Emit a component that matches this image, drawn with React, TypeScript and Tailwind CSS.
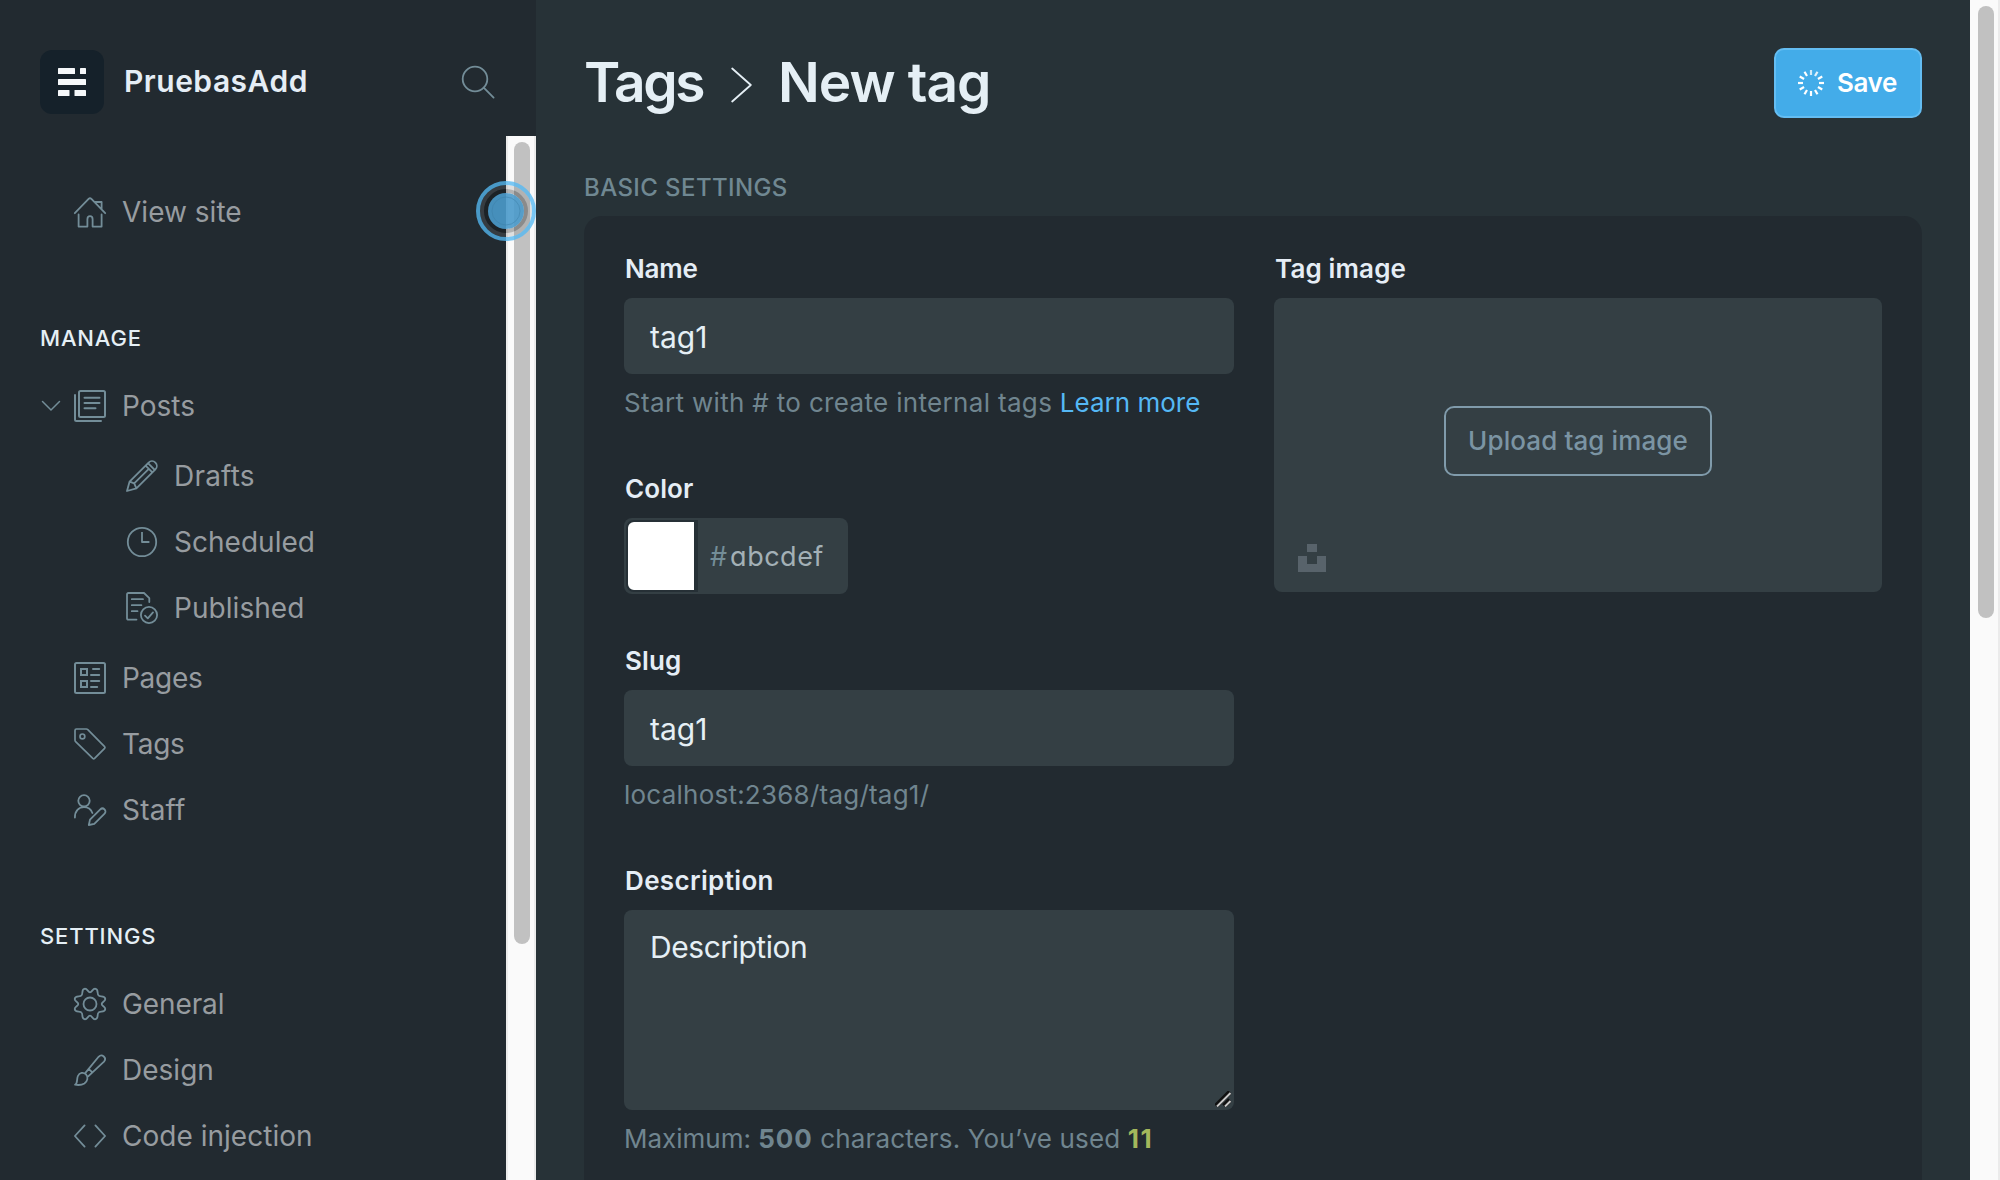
import type { ReactNode } from 'react'

function Icon({ children, w = 2 }: { children: ReactNode; w?: number }) {
  return (
    <svg viewBox="0 0 32 32" className="size-8 shrink-0 overflow-visible" fill="none" stroke="#738d98" strokeWidth={w} strokeLinecap="round" strokeLinejoin="round">
      {children}
    </svg>
  )
}

const icons = {
  home: (
    <Icon w={1.8}>
      <path d="M.8 17.2 14.6 2.9Q16 1.6 17.4 2.9L31.2 17.2M4.6 18.5V30.6H13.4V23.2Q13.4 20.2 16 20.2T18.6 23.2V30.6H27.6V18.5M20.5 6H27.6V13.2" />
    </Icon>
  ),
  posts: (
    <Icon>
      <rect x="5" y="1" width="26" height="26" rx="1.5" />
      <path d="M10.5 7.8H25.5M10.5 13H25.5M10.5 18.3H21.5M1 5V29.5Q1 31 2.5 31H27" />
    </Icon>
  ),
  pencil: (
    <Icon w={1.8}>
      <path d="M1 31 3.6 21.6 22.6 2.6A4.7 4.7 0 0 1 29.4 9.4L10.4 28.4ZM3.6 21.6 8.2 23.4 10.4 28.4M19.6 5.6 26.4 12.4M22 3.2 28.8 10M8.2 23.4 22.8 8.8" />
    </Icon>
  ),
  clock: (
    <Icon w={1.8}>
      <circle cx="16" cy="16" r="14.2" />
      <path d="M16 7V16H22.5" strokeLinecap="square" />
    </Icon>
  ),
  published: (
    <Icon w={1.8}>
      <path d="M10.5 27.6H2.4Q1 27.6 1 26.2V2.4Q1 1 2.4 1H18L23.3 6.2V10M5.8 7.2H17M5.8 13.2H15.4M5.8 19.2H11.5" />
      <circle cx="23" cy="23" r="8.1" />
      <path d="M19 23.6 21.8 26.4 27 20.4" />
    </Icon>
  ),
  pages: (
    <Icon>
      <rect x="1" y="1" width="30" height="30" rx="1.5" />
      <path d="M7 7H13V13H7ZM7 19H13V25H7ZM19 7H25.2M17 13H25.2M17 19H25.2M17 25H23.2" strokeLinejoin="miter" />
    </Icon>
  ),
  tag: (
    <Icon w={1.7}>
      <path d="M2.4 1H12.4Q13.2 1 13.8 1.6L30.6 18.6Q31.4 19.5 30.6 20.4L20.6 30.4Q19.7 31.2 18.8 30.4L1.6 13.6Q1 13 1 12.2V2.4Q1 1 2.4 1Z" />
      <circle cx="8.4" cy="8.4" r="2.4" />
    </Icon>
  ),
  staff: (
    <Icon w={1.8}>
      <circle cx="10" cy="6.8" r="5.7" />
      <path d="M.9 23.5C.9 17 4.6 13.2 10 13.2 14 13.2 17 15.4 18.4 19M14.8 31 16 25.6 26.3 15.4A3 3 0 0 1 30.6 19.6L20.3 29.9Z" />
    </Icon>
  ),
  gear: (
    <Icon w={1.8}>
      <path
        transform="translate(16 16)"
        d="M0-11.7C2-11.7 2.6-15.3 5-15.3 9.2-15 6.6-9.4 8.6-8.6 9.4-6.6 15-9.2 15.3-5 15.3-2.6 11.7-2 11.7 0 11.7 2 15.3 2.6 15.3 5 15 9.2 9.4 6.6 8.6 8.6 6.6 9.4 9.2 15 5 15.3 2.6 15.3 2 11.7 0 11.7-2 11.7-2.6 15.3-5 15.3-9.2 15-6.6 9.4-8.6 8.6-9.4 6.6-15 9.2-15.3 5-15.3 2.6-11.7 2-11.7 0-11.7-2-15.3-2.6-15.3-5-15-9.2-9.4-6.6-8.6-8.6-6.6-9.4-9.2-15-5-15.3-2.6-15.3-2-11.7 0-11.7Z"
      />
      <circle cx="16" cy="16" r="6.5" />
    </Icon>
  ),
  brush: (
    <Icon w={1.8}>
      <path d="M1 30.7C4 29.2 2.4 25.4 3.9 22 5.5 18.4 9.4 18 12 20.4 14.6 23.2 13.6 27.2 10.4 29.4 7.6 31.2 4 31.2 1 30.7ZM11 19.4 24.6 2.8C28-.8 33.2 4 30 7.6L14.2 22.4M14.6 14.8 18.4 18.4" />
    </Icon>
  ),
  code: (
    <Icon w={1.8}>
      <path d="M10.6 5.4.9 16 10.6 26.6M21.4 5.4 31.1 16 21.4 26.6" />
    </Icon>
  ),
}

function NavItem({ icon, label, sub, open, ls = 'tracking-[0.02px]' }: { icon: ReactNode; label: string; sub?: boolean; open?: boolean; ls?: string }) {
  return (
    <div className={`flex h-[66px] items-center ${sub ? 'pl-[126px]' : open ? 'pl-[41px]' : 'pl-[74px]'}`}>
      {open && (
        <svg viewBox="0 0 20 12" className="mr-[13px] h-3 w-5" fill="none" stroke="#738d98" strokeWidth="1.5" strokeLinecap="round">
          <path d="M1.5 1.5 10 10 18.5 1.5" />
        </svg>
      )}
      {icon}
      <span className={`ml-4 pt-px text-[28px] leading-[35px] text-[#979ca0] ${ls}`}>{label}</span>
    </div>
  )
}

function Heading({ children }: { children: ReactNode }) {
  return <h2 className="mb-[18px] pl-10 text-[22px] leading-[34px] font-medium tracking-[0.85px] text-[#e5eff5]">{children}</h2>
}

function Label({ children, ls = 'tracking-[0.1px]' }: { children: ReactNode; ls?: string }) {
  return <div className={`mb-3.5 pl-px text-[26px] leading-[30px] font-semibold text-[#e5edf5] ${ls}`}>{children}</div>
}

function Help({ children }: { children: ReactNode }) {
  return <p className="mt-[11px] mb-[-1px] text-[26px] leading-9 whitespace-pre text-[#70858f]">{children}</p>
}

function TextInput({ value }: { value: string }) {
  return <div className="flex h-[76px] items-center rounded-lg bg-[#343f44] px-[26px] pt-[2px] text-[30px] text-[#e5eff5]">{value}</div>
}

const spokes = Array.from({ length: 12 }, (_, i) => i)

function Sidebar() {
  return (
    <aside className="relative flex w-[536px] shrink-0 flex-col bg-[#222a30]">
      <header className="flex h-[136px] shrink-0 items-start pt-[50px] pr-[41px] pl-10">
        <div className="flex size-16 items-center justify-center rounded-xl bg-[#15212a]">
          <svg viewBox="0 0 28 28" className="size-7" fill="#f5f8fa">
            <rect width="17" height="6" rx=".6" />
            <rect x="22" width="6" height="6" rx=".6" />
            <rect y="11" width="28" height="6" rx=".6" />
            <rect y="22" width="11.5" height="6" rx=".6" />
            <rect x="16.5" y="22" width="11.5" height="6" rx=".6" />
          </svg>
        </div>
        <span className="ml-5 text-[30px] leading-[62px] font-semibold tracking-[0.5px] text-[#e5edf5]">PruebasAdd</span>
        <svg viewBox="0 0 34 34" className="mt-[15px] ml-auto size-[34px]" fill="none" stroke="#738d98" strokeWidth="1.8" strokeLinecap="round">
          <circle cx="14" cy="14" r="12.3" />
          <path d="M22.7 22.7 32.6 32.6" />
        </svg>
      </header>
      <div className="flex min-h-0 flex-1">
        <nav className="min-w-0 flex-1 overflow-hidden pt-[43px]">
          <NavItem icon={icons.home} label="View site" />
          <div className="mt-[76px]">
            <Heading>MANAGE</Heading>
            <NavItem icon={icons.posts} label="Posts" open />
            <div className="my-1">
              <NavItem icon={icons.pencil} label="Drafts" sub ls="tracking-[0.2px]" />
              <NavItem icon={icons.clock} label="Scheduled" sub />
              <NavItem icon={icons.published} label="Published" sub ls="tracking-[0.05px]" />
            </div>
            <NavItem icon={icons.pages} label="Pages" ls="tracking-[-0.3px]" />
            <NavItem icon={icons.tag} label="Tags" ls="tracking-[-0.3px]" />
            <NavItem icon={icons.staff} label="Staff" ls="tracking-[0.2px]" />
          </div>
          <div className="mt-[76px]">
            <Heading>SETTINGS</Heading>
            <NavItem icon={icons.gear} label="General" ls="tracking-[-0.1px]" />
            <NavItem icon={icons.brush} label="Design" />
            <NavItem icon={icons.code} label="Code injection" />
          </div>
        </nav>
        <div className="w-[30px] shrink-0 border-x-2 border-[#ebebeb] bg-[#fafafa] px-1.5 pt-1.5">
          <div className="h-[802px] w-4 rounded-full bg-[#c1c1c1]" />
        </div>
      </div>
      {/* click pulse over the scrollbar edge */}
      <svg viewBox="-30 -30 60 60" className="absolute top-[181px] left-[476px] size-[60px]" fill="none">
        <circle r="24" stroke="#808080" strokeOpacity=".22" strokeWidth="4" />
        <circle r="20" stroke="#101010" strokeOpacity=".3" strokeWidth="4" />
        <circle r="28" stroke="#55b8f2" strokeOpacity=".78" strokeWidth="4" />
        <circle r="18" fill="#4a9acb" fillOpacity=".9" />
        <circle r="14" stroke="#3b7fa8" strokeOpacity=".5" strokeWidth="1" />
      </svg>
    </aside>
  )
}

function Main() {
  return (
    <main className="flex min-w-0 flex-1 flex-col px-12 pt-12">
      <header className="flex h-[70px] shrink-0 items-start text-[#e5eff5]">
        <h1 className="flex text-[55px] leading-[69px] font-semibold">
          <span className="w-[147px] tracking-[-2.3px]">Tags</span>
          <svg viewBox="0 0 22 36" className="mt-[19px] h-9 w-[22px]" fill="none" stroke="#e5eff5" strokeWidth="1.8" strokeLinecap="round" strokeLinejoin="round">
            <path d="M1.2 1.5 19.8 18 1.2 34.5" />
          </svg>
          <span className="ml-[25px] tracking-[-0.95px]">New tag</span>
        </h1>
        <button className="ml-auto flex h-[70px] w-[148px] items-center rounded-[10px] border-2 border-[#64bdf2] bg-[#43ace9] pl-[22px] text-[26px] font-semibold tracking-[-0.4px] text-white">
          <svg viewBox="-13 -13 26 26" className="mr-[13px] size-[26px]" stroke="white" strokeWidth="2.2">
            {spokes.map((i) => (
              <path key={i} d="M0-13V-8" transform={`rotate(${i * 30})`} opacity={i === 0 ? 0.75 : i < 2 ? 0.85 : 1} />
            ))}
          </svg>
          <span className="pb-[2px]">Save</span>
        </button>
      </header>
      <h4 className="mt-14 mb-3.5 text-2xl leading-7 font-medium tracking-[0.4px] text-[#708892]">BASIC SETTINGS</h4>
      <section className="grid flex-1 grid-cols-[610px_608px] gap-10 rounded-t-[18px] bg-[#222a30] px-10 pt-[38px]">
        <div>
          <Label ls="tracking-[-0.2px]">Name</Label>
          <TextInput value="tag1" />
          <Help>
            <span className="tracking-[0.33px]">Start with # to create internal tags </span>
            <span className="text-[#55b8f5]">Learn more</span>
          </Help>
          <div className="mt-[54px]">
            <Label>Color</Label>
            <div className="flex h-[76px] w-56 items-center rounded-lg bg-[#343f44] p-[2px]">
              <div className="h-[72px] w-[72px] rounded-l-lg border-2 border-r-4 border-[#263036] bg-white" />
              <span className="ml-3 pt-px text-[27px] leading-10 text-[#738d98]">#</span>
              <span className="ml-[3px] pt-0.5 text-[27px] leading-10 tracking-[0.5px] text-[#a3b0b6] [font-feature-settings:'cv11']">abcdef</span>
            </div>
          </div>
          <div className="mt-[52px]">
            <Label>Slug</Label>
            <TextInput value="tag1" />
            <Help>
              <span className="tracking-[0.23px]">localhost:2368/tag/tag1/</span>
            </Help>
          </div>
          <div className="mt-[54px]">
            <Label ls="tracking-[0.36px]">Description</Label>
            <div className="relative h-[200px] rounded-lg bg-[#343f44] px-[26px] pt-[15px] text-[30px] leading-[44px] tracking-[-0.45px] text-[#e5eff5]">
              Description
              <svg viewBox="0 0 16 16" className="absolute right-[3px] bottom-[3px] size-4" fill="none">
                <path d="M1 15 15 1M9 15 15 9" stroke="#111" strokeWidth="5" />
                <path d="M2 15.5 15.5 2M10 15.5 15.5 10" stroke="#c8c8c8" strokeWidth="2" />
              </svg>
            </div>
            <Help>
              Maximum: <b className="font-bold tracking-[0.9px]">500</b>
              <span className="tracking-[0.15px]"> characters. You’ve used </span>
              <b className="font-bold tracking-[1.5px] text-[#a4b85c]">11</b>
            </Help>
          </div>
        </div>
        <div>
          <Label ls="tracking-[0.15px]">Tag image</Label>
          <div className="relative flex h-[294px] items-center justify-center rounded-lg bg-[#343f44]">
            <button className="-mt-[8px] h-[70px] w-[268px] rounded-[10px] border-2 border-[#809bab] pb-0.5 text-[26px] font-medium tracking-[0.1px] text-[#7b94a3]">Upload tag image</button>
            <svg viewBox="0 0 28 28" className="absolute bottom-5 left-6 size-7" fill="#58636b">
              <path d="M9 0H19V8H9ZM0 12H9V20H19V12H28V28H0Z" />
            </svg>
          </div>
        </div>
      </section>
    </main>
  )
}

export default function App() {
  return (
    <div className="flex h-[1180px] w-[2000px] overflow-hidden bg-[#273237] font-['Inter',sans-serif]">
      <Sidebar />
      <Main />
      <div className="w-[30px] shrink-0 border-r-2 border-[#ebebeb] bg-[#fafafa] pt-1.5 pl-2">
        <div className="h-[612px] w-4 rounded-full bg-[#c1c1c1]" />
      </div>
    </div>
  )
}
